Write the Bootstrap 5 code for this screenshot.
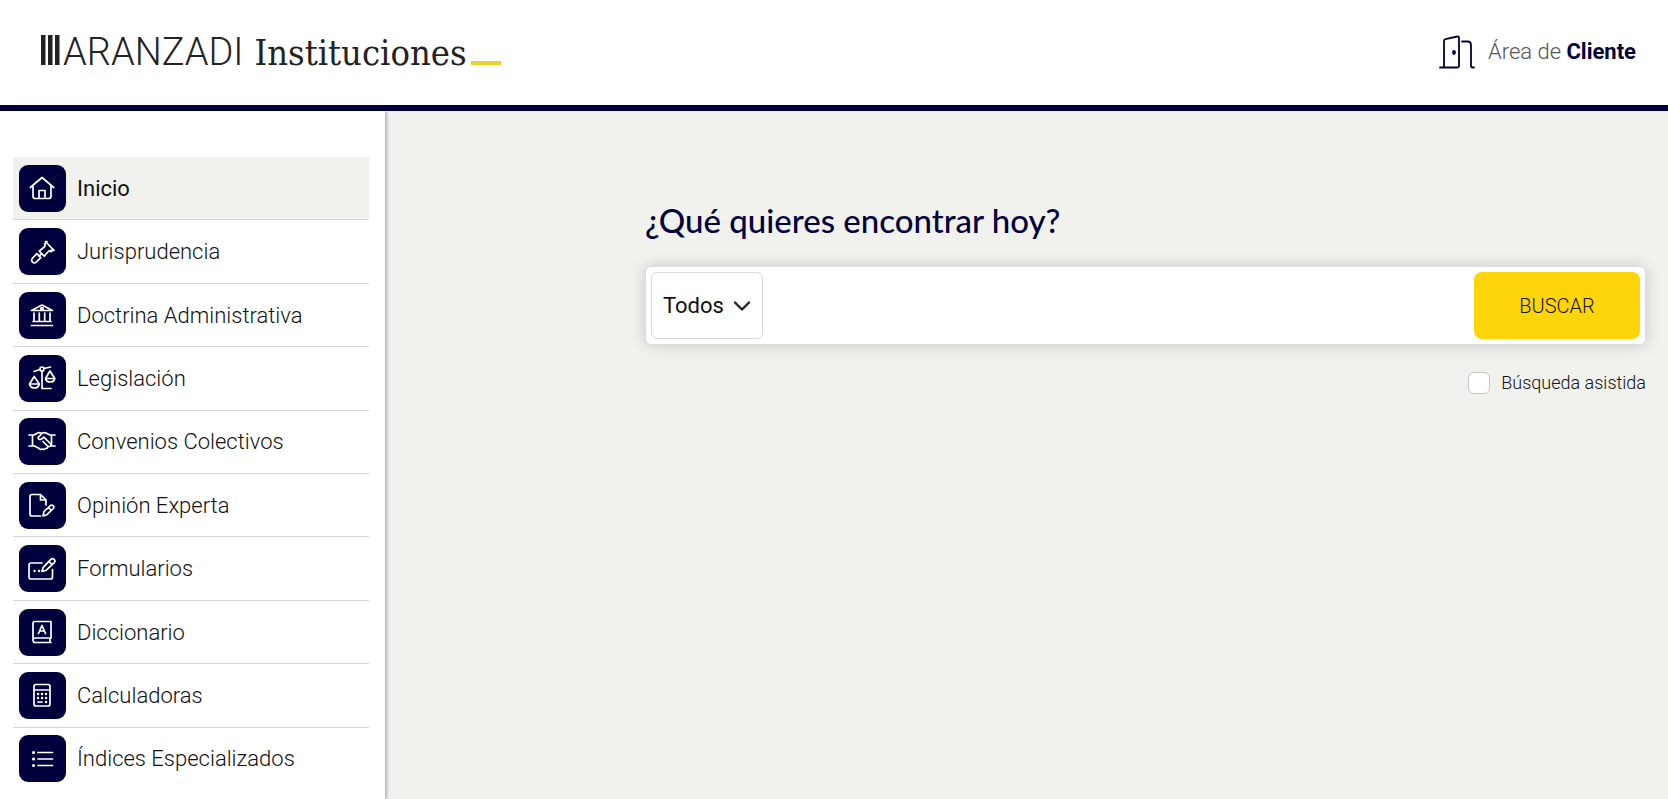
<!DOCTYPE html>
<html lang="es">
<head>
<meta charset="utf-8">
<meta name="viewport" content="width=device-width, initial-scale=1">
<title>Aranzadi Instituciones</title>
<link rel="stylesheet" href="https://cdn.jsdelivr.net/npm/bootstrap@5.3.0/dist/css/bootstrap.min.css">
<style>
  :root { --navy: #00003c; --ink: #222; --paper: #f1f2ee; }
  body { font-family: Roboto, "Liberation Sans", sans-serif; color: var(--ink); background: var(--paper); }
  .site-header { min-height: 111px; border-bottom: 6px solid var(--navy); padding: 0 32px 0 41px; }
  .brand { color: var(--ink); line-height: 48px; }
  .brand-name { font: 300 38px/48px Roboto, sans-serif; margin: 0 11px 0 3px; }
  .brand-product { font: 400 36px/48px "DejaVu Serif Condensed", "DejaVu Serif", serif; font-stretch: condensed; }
  .brand-line { width: 30px; height: 4px; background: #ebd32c; margin-left: 4px; }
  .client-link { font-size: 22px; font-weight: 300; color: #555; gap: 12px; padding-bottom: 2px; }
  .client-link strong { font-weight: 700; color: var(--navy); }
  .site-menu { width: 385px; padding: 46px 16px 8px 13px; box-shadow: 1px 0 4px rgba(0,0,0,.4); }
  .menu-item { min-height: 63px; border-bottom: 1px solid #d6d6d6; }
  .menu-item:last-child { border-bottom-color: transparent; }
  .menu-item a { color: #111; font-size: 22px; font-weight: 300; gap: 11px; padding: 0 6px; }
  .menu-item a.active { background: var(--paper); font-weight: 400; }
  .tile { width: 47px; height: 47px; border-radius: 9px; background: var(--navy); }
  .tile svg { width: 28px; height: 28px; margin-right: 2px; fill: none; stroke: #fff; stroke-width: 1.7; stroke-linecap: round; stroke-linejoin: round; }
  .search-area { padding: 86px 22px 0 260px; }
  .search-inner h1 { font: 500 33px/46px Lato, sans-serif; color: var(--navy); margin-bottom: 23px; }
  .search-box { padding: 5px; border: 1px solid #dcdcdc; border-radius: 6px; box-shadow: 0 0 16px rgba(0,0,0,.17); }
  .scope { width: 112px; height: 67px; font-size: 22px; font-weight: 400; color: #111; border-color: #d8d8d8; border-radius: 6px; padding: 0 36px 0 11px;
    background-image: url("data:image/svg+xml,%3Csvg xmlns='http://www.w3.org/2000/svg' viewBox='0 0 18 18'%3E%3Cpath d='M2 5.5l7 7 7-7' fill='none' stroke='%23222' stroke-width='2.4' stroke-linecap='round' stroke-linejoin='round'/%3E%3C/svg%3E"); background-size: 18px; background-position: right 11px center; }
  .search-btn { width: 166px; height: 67px; font-size: 20px; font-weight: 300; background: #fdd50a; color: #1a1200; border-radius: 8px; }
  .search-btn:hover { background: #efc800; }
  .query { font-size: 20px; }
  .assist { font-size: 18px; font-weight: 300; color: #111; gap: 11px; margin-top: 24px; }
  .assist .form-check-input { width: 22px; height: 22px; border-color: #c4c4c4; border-radius: 6px; }
</style>
</head>
<body>
<div class="d-flex flex-column min-vh-100">
  <header class="site-header bg-white d-flex align-items-center justify-content-between">
    <a class="brand d-flex align-items-baseline text-decoration-none" href="#">
      <svg width="19" height="30" viewBox="0 0 19 30" aria-hidden="true"><path d="M0 0h4.500v30H0zM7 0h4.500v30H7zM14 0h4.500v30H14z" fill="#222"/></svg>
      <span class="brand-name">ARANZADI</span>
      <span class="brand-product">Instituciones</span>
      <span class="brand-line"></span>
    </a>
    <a class="client-link d-flex align-items-center text-decoration-none" href="#">
      <svg width="38" height="34" viewBox="0 0 38 34" fill="none" stroke="#00003c" stroke-width="1.8" stroke-linecap="round" stroke-linejoin="round" aria-hidden="true"><path d="M2 32.500h17.500q1.500 0 1.500-1.500V3q0-1.800-1.800-1.500L7.500 4.200Q6 4.600 6 6v26.500M24 6.500h5.500q3.500 0 3.500 3.500v20.500q0 2 2 2h1"/><ellipse cx="16" cy="17.500" rx="1" ry="1.500" fill="#00003c"/></svg>
      <span>Área de <strong>Cliente</strong></span>
    </a>
  </header>

  <div class="d-flex flex-fill">
    <nav class="site-menu bg-white d-flex flex-column flex-shrink-0" aria-label="Principal">
      <ul class="list-unstyled d-flex flex-column flex-fill mb-0">
        <li class="menu-item d-flex flex-fill"><a class="active d-flex align-items-center flex-fill text-decoration-none" href="#" aria-current="page">
          <span class="tile d-flex align-items-center justify-content-center"><svg viewBox="0 0 28 28"><path d="M2.300 13.500L14 3.500l11.700 10M5 11.800v10.400Q5 24.500 7.300 24.500h13.400q2.300 0 2.300-2.300V11.800M11 24v-7.500h6V24"/></svg></span>Inicio</a></li>
        <li class="menu-item d-flex flex-fill"><a class="d-flex align-items-center flex-fill text-decoration-none" href="#">
          <span class="tile d-flex align-items-center justify-content-center"><svg viewBox="0 0 28 28"><path d="M17.500 3.500l8.500 9M16.500 6l2.500-2.500M22.800 13.800l2.700-2.300M17.200 5.800l-.4 2.700-5.600 4.700 5 5 4.800-5.400 2.800-.4M13.700 15.700l-2.700 2.500M8.800 15.700l4 4-4.600 4.400q-1.900 1.600-3.700 0t0-3.900z"/></svg></span>Jurisprudencia</a></li>
        <li class="menu-item d-flex flex-fill"><a class="d-flex align-items-center flex-fill text-decoration-none" href="#">
          <span class="tile d-flex align-items-center justify-content-center"><svg viewBox="0 0 28 28"><path d="M3.500 9.500L14 4l10.500 5.500zM6 12v8M11.300 12v8M16.700 12v8M22 12v8M5 20.500h18M3.500 24.500h21"/><circle cx="14" cy="8" r="1.300"/></svg></span>Doctrina Administrativa</a></li>
        <li class="menu-item d-flex flex-fill"><a class="d-flex align-items-center flex-fill text-decoration-none" href="#">
          <span class="tile d-flex align-items-center justify-content-center"><svg viewBox="0 0 28 28"><path d="M6 7.500l6-2M16 4.500L22.500 3M14 7v17.500h9M6.200 12.500L1.500 20h9.800zM22 7l-4.500 7.500h9.300zM1.500 20q.8 4 4.900 4t4.900-4M17.500 14.500q.6 3.500 4.600 3.500t4.700-3.500"/><circle cx="14" cy="5" r="2"/></svg></span>Legislación</a></li>
        <li class="menu-item d-flex flex-fill"><a class="d-flex align-items-center flex-fill text-decoration-none" href="#">
          <span class="tile d-flex align-items-center justify-content-center"><svg viewBox="0 0 28 28"><path d="M1 7h5l3.500-2q2-.8 4 .3M27 7h-5l-4-2q-2-.8-4 .5l-3.500 3.500q-.9 1.400.6 2.300 1.400.6 2.700-.5l2-1.600 7 6.800q.7 1.800-1.300 2.500l-1.500.2q-.3 2-2.600 1.800-1.200 1.600-3.200.6-1.800 1-3-.6L6 17.800M4.500 7v11M23.500 7v11M1 18h5M27 18h-4.500M15 13.500l4.500 4.500"/></svg></span>Convenios Colectivos</a></li>
        <li class="menu-item d-flex flex-fill"><a class="d-flex align-items-center flex-fill text-decoration-none" href="#">
          <span class="tile d-flex align-items-center justify-content-center"><svg viewBox="0 0 28 28"><path d="M12.500 25H4q-2 0-2-2V5.500q0-2 2-2h8.500l5.500 5.500v5M12.500 3.800V9h5.200M15 25l1-4.500 6.500-6q1.600-1 2.800.3t0 2.700L19 23.700zM20.500 16.500l2.800 2.800"/></svg></span>Opinión Experta</a></li>
        <li class="menu-item d-flex flex-fill"><a class="d-flex align-items-center flex-fill text-decoration-none" href="#">
          <span class="tile d-flex align-items-center justify-content-center"><svg viewBox="0 0 28 28"><path d="M14 8H3Q1 8 1 10v12q0 2 2 2h19.500q2 0 2-2v-7.500M14 16.500l1.200-4.200 7.600-8q1.700-1.500 3.300 0t.2 3.300l-8 7.600zM21 6.500l3.200 3.200"/><path d="M6.500 16h.1M11 16h.1" stroke-width="2.300"/></svg></span>Formularios</a></li>
        <li class="menu-item d-flex flex-fill"><a class="d-flex align-items-center flex-fill text-decoration-none" href="#">
          <span class="tile d-flex align-items-center justify-content-center"><svg viewBox="0 0 28 28"><path d="M5 22V5.500q0-2 2-2h16V20H7.500Q5 20 5 22.300T7.500 24.500H23M22 20v4.500M10.500 15.500L14 7.500l3.500 8M11.800 13h4.400"/></svg></span>Diccionario</a></li>
        <li class="menu-item d-flex flex-fill"><a class="d-flex align-items-center flex-fill text-decoration-none" href="#">
          <span class="tile d-flex align-items-center justify-content-center"><svg viewBox="0 0 28 28"><rect x="6" y="3.500" width="16" height="21.500" rx="2"/><path d="M6 9h16"/><path d="M10 13h.1M14 13h.1M18 13h.1M10 17h.1M14 17h.1M18 17h.1M18 21h.1" stroke-width="2.400"/><path d="M10 21h4"/></svg></span>Calculadoras</a></li>
        <li class="menu-item d-flex flex-fill"><a class="d-flex align-items-center flex-fill text-decoration-none" href="#">
          <span class="tile d-flex align-items-center justify-content-center"><svg viewBox="0 0 28 28"><path d="M10 7.500h14.500M10 14h14.500M10 20.500h14.500"/><path d="M5.500 7.500h.1M5.500 14h.1M5.500 20.500h.1" stroke-width="3"/></svg></span>Índices Especializados</a></li>
      </ul>
    </nav>

    <main class="search-area flex-fill">
      <form class="search-inner">
        <h1>¿Qué quieres encontrar hoy?</h1>
        <div class="search-box bg-white d-flex">
          <select class="scope form-select flex-shrink-0" aria-label="Ámbito de búsqueda"><option>Todos</option></select>
          <input class="query form-control border-0 shadow-none" type="text" aria-label="Texto de búsqueda">
          <button class="search-btn btn flex-shrink-0" type="button">BUSCAR</button>
        </div>
        <div class="assist d-flex align-items-center justify-content-end">
          <input class="form-check-input m-0" type="checkbox" id="assist">
          <label for="assist">Búsqueda asistida</label>
        </div>
      </form>
    </main>
  </div>
</div>
<script src="https://cdn.jsdelivr.net/npm/bootstrap@5.3.0/dist/js/bootstrap.bundle.min.js"></script>
</body>
</html>
